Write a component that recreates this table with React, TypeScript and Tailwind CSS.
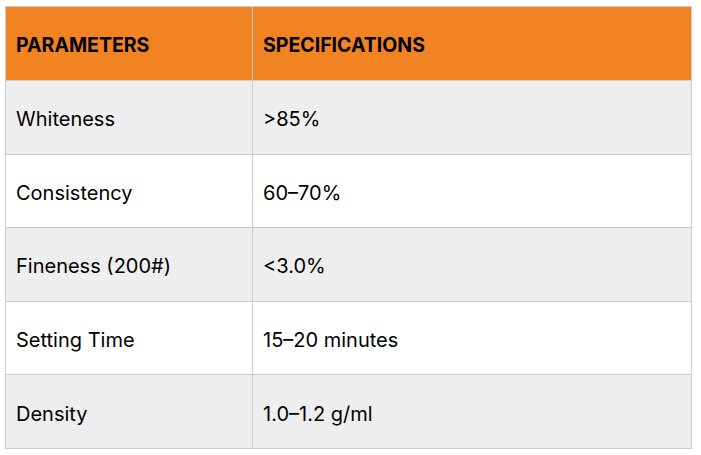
import React from 'react';

const rows = [
  { name: 'Whiteness', spec: '>85%' },
  { name: 'Consistency', spec: '60–70%' },
  { name: 'Fineness (200#)', spec: '<3.0%' },
  { name: 'Setting Time', spec: '15–20 minutes' },
  { name: 'Density', spec: '1.0–1.2 g/ml' },
];

export default function App() {
  return (
    <div className="w-[701px] h-[455px] bg-white pl-[5px] pt-[6px]" style={{ fontFamily: 'Inter, "Noto Sans", sans-serif' }}>
      <table className="w-[687px] border-collapse text-black">
        <thead>
          <tr className="h-[74px] bg-[#f28322]">
            <th className="w-[247px] border border-[#cccccc] pl-[10px] pt-[4px] text-left text-[19.5px] font-bold">PARAMETERS</th>
            <th className="border border-[#cccccc] pl-[10px] pt-[4px] text-left text-[19.5px] font-bold">SPECIFICATIONS</th>
          </tr>
        </thead>
        <tbody>
          {rows.map((row, i) => (
            <tr key={row.name} className={`h-[73.6px] ${i % 2 === 0 ? 'bg-[#eeeeee]' : 'bg-white'}`}>
              <td className="border border-[#cccccc] pl-[10px] pt-[4px] text-[20px]">{row.name}</td>
              <td className="border border-[#cccccc] pl-[10px] pt-[4px] text-[20px]">{row.spec}</td>
            </tr>
          ))}
        </tbody>
      </table>
    </div>
  );
}
